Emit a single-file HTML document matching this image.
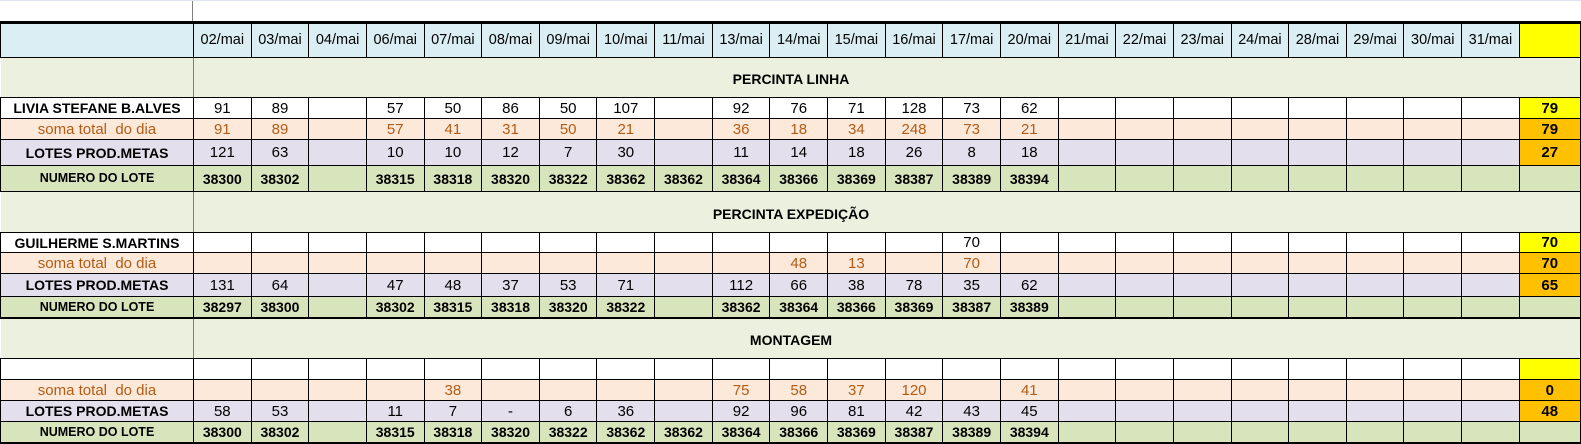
<!DOCTYPE html>
<html><head><meta charset="utf-8"><style>
body{margin:0;background:#fff;width:1581px;height:444px;overflow:hidden;font-family:"Liberation Sans",Arial,sans-serif;}
.top{position:absolute;left:0;top:0;width:1581px;height:21px;background:#fff;border-top:1px solid #dbe5f1;box-sizing:border-box}
.top .v{position:absolute;left:192px;top:0;width:1px;height:21px;background:#808080}
.thick{position:absolute;left:0;top:21px;width:1581px;height:2px;background:#000}
table{position:absolute;left:0;top:23px;border-collapse:collapse;table-layout:fixed;width:1580px}
td{border:1px solid #000;padding:0;text-align:center;font-size:15px;white-space:nowrap;overflow:hidden;line-height:1}
td.n{font-weight:bold;font-size:14px}
tr.h td{background:#daeef3;height:33px;font-size:14.5px}
tr.s td{background:#ebf1de;border-left:none;border-right:none}
tr.s td.c0{border-right:1px solid #808080}
tr.s td.t{text-align:left;font-weight:bold;font-size:14px;border-right:1px solid #000}
tr.s td.t span{display:inline-block;width:200px;text-align:center;margin-left:497px;padding-top:3px}
tr.w td{background:#fff}
tr.o td{background:#fde9d9;color:#b35b14}
tr.o td.n{font-weight:normal;font-size:15px}
tr.l td{background:#e4dfec}
tr.g td{background:#d8e4bc;font-weight:bold;font-size:14px}
tr.g td.n{font-size:12.5px}
td.y{background:#ffff00!important;font-weight:bold;color:#000!important}
td.or{background:#ffc000!important;font-weight:bold;color:#000!important}
tr.bb td{border-bottom:2px solid #000}
</style></head><body>
<div class="top"><div class="v"></div></div>
<div class="thick"></div>
<table>
<colgroup><col style="width:193px"><col span="23" style="width:57.65px"><col style="width:61px"></colgroup>
<tr class="h"><td></td><td>02/mai</td><td>03/mai</td><td>04/mai</td><td>06/mai</td><td>07/mai</td><td>08/mai</td><td>09/mai</td><td>10/mai</td><td>11/mai</td><td>13/mai</td><td>14/mai</td><td>15/mai</td><td>16/mai</td><td>17/mai</td><td>20/mai</td><td>21/mai</td><td>22/mai</td><td>23/mai</td><td>24/mai</td><td>28/mai</td><td>29/mai</td><td>30/mai</td><td>31/mai</td><td class="y"></td></tr>
<tr class="s" style="height:40px"><td class="c0"></td><td class="t" colspan="24"><span>PERCINTA LINHA</span></td></tr>
<tr class="w" style="height:21px"><td class="n">LIVIA STEFANE B.ALVES</td><td>91</td><td>89</td><td></td><td>57</td><td>50</td><td>86</td><td>50</td><td>107</td><td></td><td>92</td><td>76</td><td>71</td><td>128</td><td>73</td><td>62</td><td></td><td></td><td></td><td></td><td></td><td></td><td></td><td></td><td class="y">79</td></tr>
<tr class="o" style="height:21px"><td class="n">soma total&nbsp; do dia</td><td>91</td><td>89</td><td></td><td>57</td><td>41</td><td>31</td><td>50</td><td>21</td><td></td><td>36</td><td>18</td><td>34</td><td>248</td><td>73</td><td>21</td><td></td><td></td><td></td><td></td><td></td><td></td><td></td><td></td><td class="or">79</td></tr>
<tr class="l" style="height:26px"><td class="n">LOTES PROD.METAS</td><td>121</td><td>63</td><td></td><td>10</td><td>10</td><td>12</td><td>7</td><td>30</td><td></td><td>11</td><td>14</td><td>18</td><td>26</td><td>8</td><td>18</td><td></td><td></td><td></td><td></td><td></td><td></td><td></td><td></td><td class="or">27</td></tr>
<tr class="g" style="height:26px"><td class="n">NUMERO DO LOTE</td><td>38300</td><td>38302</td><td></td><td>38315</td><td>38318</td><td>38320</td><td>38322</td><td>38362</td><td>38362</td><td>38364</td><td>38366</td><td>38369</td><td>38387</td><td>38389</td><td>38394</td><td></td><td></td><td></td><td></td><td></td><td></td><td></td><td></td><td></td></tr>
<tr class="s" style="height:41px"><td class="c0"></td><td class="t" colspan="24"><span>PERCINTA EXPEDIÇÃO</span></td></tr>
<tr class="w" style="height:20px"><td class="n">GUILHERME S.MARTINS</td><td></td><td></td><td></td><td></td><td></td><td></td><td></td><td></td><td></td><td></td><td></td><td></td><td></td><td>70</td><td></td><td></td><td></td><td></td><td></td><td></td><td></td><td></td><td></td><td class="y">70</td></tr>
<tr class="o" style="height:21px"><td class="n">soma total&nbsp; do dia</td><td></td><td></td><td></td><td></td><td></td><td></td><td></td><td></td><td></td><td></td><td>48</td><td>13</td><td></td><td>70</td><td></td><td></td><td></td><td></td><td></td><td></td><td></td><td></td><td></td><td class="or">70</td></tr>
<tr class="l" style="height:23px"><td class="n">LOTES PROD.METAS</td><td>131</td><td>64</td><td></td><td>47</td><td>48</td><td>37</td><td>53</td><td>71</td><td></td><td>112</td><td>66</td><td>38</td><td>78</td><td>35</td><td>62</td><td></td><td></td><td></td><td></td><td></td><td></td><td></td><td></td><td class="or">65</td></tr>
<tr class="g bb" style="height:21px"><td class="n">NUMERO DO LOTE</td><td>38297</td><td>38300</td><td></td><td>38302</td><td>38315</td><td>38318</td><td>38320</td><td>38322</td><td></td><td>38362</td><td>38364</td><td>38366</td><td>38369</td><td>38387</td><td>38389</td><td></td><td></td><td></td><td></td><td></td><td></td><td></td><td></td><td></td></tr>
<tr class="s" style="height:41px"><td class="c0"></td><td class="t" colspan="24"><span>MONTAGEM</span></td></tr>
<tr class="w" style="height:21px"><td class="n"></td><td></td><td></td><td></td><td></td><td></td><td></td><td></td><td></td><td></td><td></td><td></td><td></td><td></td><td></td><td></td><td></td><td></td><td></td><td></td><td></td><td></td><td></td><td></td><td class="y"></td></tr>
<tr class="o" style="height:21px"><td class="n">soma total&nbsp; do dia</td><td></td><td></td><td></td><td></td><td>38</td><td></td><td></td><td></td><td></td><td>75</td><td>58</td><td>37</td><td>120</td><td></td><td>41</td><td></td><td></td><td></td><td></td><td></td><td></td><td></td><td></td><td class="or">0</td></tr>
<tr class="l" style="height:21px"><td class="n">LOTES PROD.METAS</td><td>58</td><td>53</td><td></td><td>11</td><td>7</td><td>-</td><td>6</td><td>36</td><td></td><td>92</td><td>96</td><td>81</td><td>42</td><td>43</td><td>45</td><td></td><td></td><td></td><td></td><td></td><td></td><td></td><td></td><td class="or">48</td></tr>
<tr class="g bb" style="height:21px"><td class="n">NUMERO DO LOTE</td><td>38300</td><td>38302</td><td></td><td>38315</td><td>38318</td><td>38320</td><td>38322</td><td>38362</td><td>38362</td><td>38364</td><td>38366</td><td>38369</td><td>38387</td><td>38389</td><td>38394</td><td></td><td></td><td></td><td></td><td></td><td></td><td></td><td></td><td></td></tr>
</table>
</body></html>
